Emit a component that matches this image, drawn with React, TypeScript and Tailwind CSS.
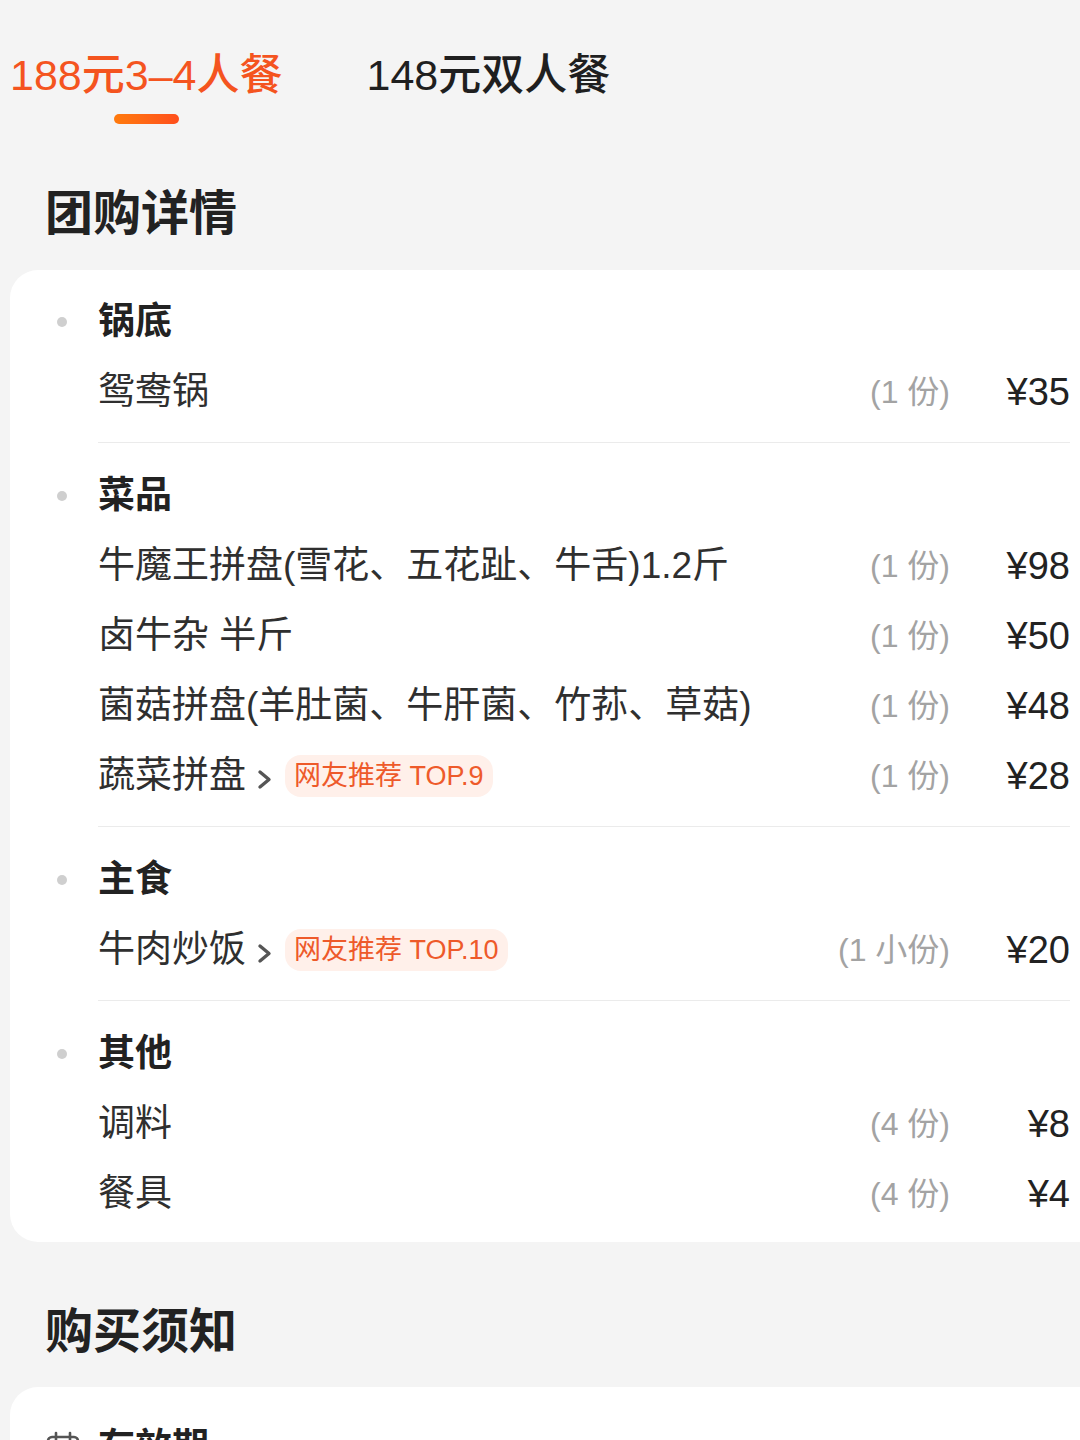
const font = { fontFamily: '"Liberation Sans", "Noto Sans CJK SC", sans-serif' }

type Item = { name: string; badge?: string; qty: string; price: string }
type Section = { title: string; items: Item[] }

const sections: Section[] = [
  { title: "锅底", items: [{ name: "鸳鸯锅", qty: "(1 份)", price: "¥35" }] },
  {
    title: "菜品",
    items: [
      { name: "牛魔王拼盘(雪花、五花趾、牛舌)1.2斤", qty: "(1 份)", price: "¥98" },
      { name: "卤牛杂 半斤", qty: "(1 份)", price: "¥50" },
      { name: "菌菇拼盘(羊肚菌、牛肝菌、竹荪、草菇)", qty: "(1 份)", price: "¥48" },
      { name: "蔬菜拼盘", badge: "网友推荐 TOP.9", qty: "(1 份)", price: "¥28" },
    ],
  },
  {
    title: "主食",
    items: [{ name: "牛肉炒饭", badge: "网友推荐 TOP.10", qty: "(1 小份)", price: "¥20" }],
  },
  {
    title: "其他",
    items: [
      { name: "调料", qty: "(4 份)", price: "¥8" },
      { name: "餐具", qty: "(4 份)", price: "¥4" },
    ],
  },
]

function Chevron() {
  return (
    <svg width="16" height="24" viewBox="0 0 16 24" className="ml-[11px] mt-[6px] shrink-0">
      <path d="M3 5 L12 12.5 L3 20" fill="none" stroke="#555" strokeWidth="3.4" strokeLinecap="round" strokeLinejoin="round" />
    </svg>
  )
}

function Row({ item }: { item: Item }) {
  return (
    <div className="flex h-[70px] items-center">
      <div className="flex flex-1 items-center min-w-0">
        <span className="text-[37px] leading-[50px] text-[#2f2f2f] whitespace-nowrap">{item.name}</span>
        {item.badge && (
          <>
            <Chevron />
            <span className="ml-[12px] h-[42px] rounded-[16px] bg-[#fff0ea] px-[9px] text-[27px] leading-[42px] text-[#ee5a2a] whitespace-nowrap">
              {item.badge}
            </span>
          </>
        )}
      </div>
      <span className="text-[32px] leading-[50px] text-[#a3a3a3] whitespace-nowrap">{item.qty}</span>
      <span className="w-[120px] text-right text-[38px] leading-[50px] text-[#222]">{item.price}</span>
    </div>
  )
}

export default function App() {
  return (
    <div className="h-[1440px] w-[1080px] overflow-hidden bg-[#f4f4f4]" style={font}>
      {/* tabs */}
      <div className="flex items-start pt-[52px] pl-[10px]">
        <div className="flex flex-col items-center">
          <span className="text-[43px] leading-[46px] font-medium text-[#f4541f] whitespace-nowrap">188元3–4人餐</span>
          <div className="mt-[16px] h-[10px] w-[65px] rounded-full bg-gradient-to-r from-[#ff7a0c] to-[#ff4e1c]" />
        </div>
        <span className="ml-[84px] text-[43px] leading-[46px] font-medium text-[#1f1f1f] whitespace-nowrap">148元双人餐</span>
      </div>

      <h2 className="mt-[62px] pl-[45px] text-[48px] leading-[56px] font-bold text-[#222]">团购详情</h2>

      <div className="mt-[28px] ml-[10px] w-[1100px] rounded-[28px] bg-white pt-[17px] pb-[13px] pl-[88px] pr-[40px]">
        {sections.map((s, i) => (
          <div key={s.title}>
            {i > 0 && <div className="mt-[15px] mb-[18px] h-px bg-[#ebebeb]" />}
            <div className="flex h-[70px] items-center">
              <span className="-ml-[41px] mr-[31px] size-[10px] rounded-full bg-[#cfcfcf]" />
              <span className="text-[37px] leading-[50px] font-bold text-[#222]">{s.title}</span>
            </div>
            {s.items.map((it) => (
              <Row key={it.name} item={it} />
            ))}
          </div>
        ))}
      </div>

      <h2 className="mt-[62px] pl-[45px] text-[48px] leading-[56px] font-bold text-[#222]">购买须知</h2>

      <div className="mt-[27px] ml-[10px] w-[1100px] rounded-[28px] bg-white pt-[36px] pl-[35px]">
        <div className="flex items-center">
          <svg width="36" height="36" viewBox="0 0 36 36" className="shrink-0">
            <rect x="3" y="7" width="30" height="26" rx="4" fill="none" stroke="#555" strokeWidth="2.6" />
            <line x1="3" y1="15" x2="33" y2="15" stroke="#555" strokeWidth="2.6" />
            <line x1="11" y1="3" x2="11" y2="10" stroke="#555" strokeWidth="2.6" strokeLinecap="round" />
            <line x1="25" y1="3" x2="25" y2="10" stroke="#555" strokeWidth="2.6" strokeLinecap="round" />
          </svg>
          <span className="ml-[17px] text-[37px] leading-[50px] font-bold text-[#222]">有效期</span>
        </div>
      </div>
    </div>
  )
}
